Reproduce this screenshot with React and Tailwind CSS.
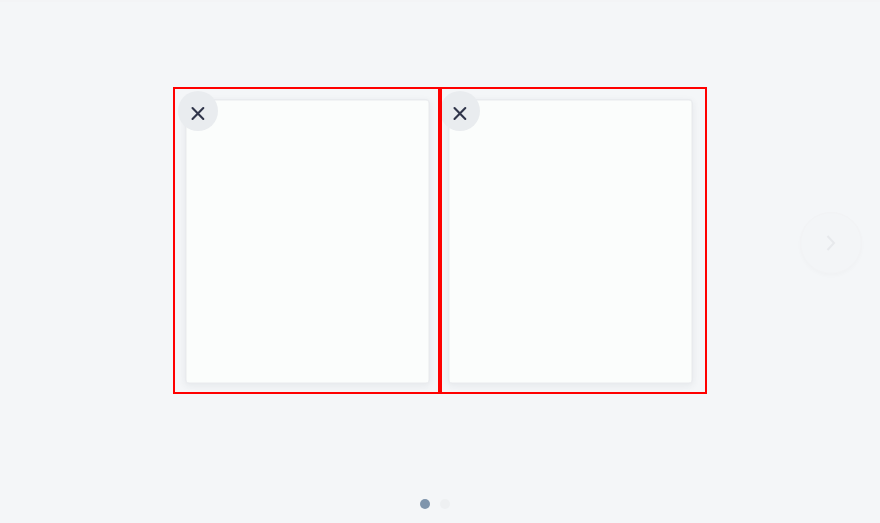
function CloseIcon() {
  return (
    <svg width="14" height="15" viewBox="0 0 14 15" fill="none" stroke="#30354a" strokeWidth="2.1" strokeLinecap="round">
      <path d="M1.5 2.1 L12.3 12.9 M12.3 2.1 L1.5 12.9" />
    </svg>
  );
}

function Slide({ label, className, buttonClassName }) {
  return (
    <div className="relative h-[307px] w-[267px] overflow-hidden border-2 border-[#ff0000]">
      <div className={`relative mt-[10px] h-[285px] w-[245px] rounded border border-[#e9ebee] bg-[#fbfdfc] shadow-[inset_0_0_0_0.5px_#e9ebed,0_2px_7px_rgba(40,55,75,0.07)] ${className}`}>
        <button
          aria-label={label}
          className={`absolute -top-[8.6px] flex size-10 items-center justify-center rounded-full bg-[#e9ecef] pt-[5px] ${buttonClassName}`}
        >
          <CloseIcon />
        </button>
      </div>
    </div>
  );
}

export default function App() {
  return (
    <main className="flex h-[523px] w-[880px] flex-col overflow-hidden border-t-2 border-[#f3f4f6] bg-[#f4f6f8] font-['Liberation_Sans',sans-serif]">
      <div className="flex h-[497px] pl-[173px] pt-[85px]">
        <div className="flex">
          <Slide label="Close first card" className="ml-[10px]" buttonClassName="-left-[8.3px]" />
          <Slide label="Close second card" className="ml-[5.5px]" buttonClassName="-left-[8.3px]" />
        </div>
        <button
          aria-label="Next"
          className="ml-[93px] mt-[125px] flex size-[62px] items-center justify-center rounded-full border border-[#f2f3f5] bg-[#f3f5f7] shadow-[0_2px_4px_rgba(40,55,75,0.02)]"
        >
          <svg width="10" height="16" viewBox="0 0 10 16" fill="none" stroke="#e7e9ec" strokeWidth="2">
            <path d="M1.5 1 L8 8 L1.5 15" />
          </svg>
        </button>
      </div>
      <div className="flex gap-[10px] pl-[420px]">
        <span className="size-[10px] rounded-full bg-[#7f95ac]" />
        <span className="size-[10px] rounded-full bg-[#eef0f2]" />
      </div>
    </main>
  );
}
